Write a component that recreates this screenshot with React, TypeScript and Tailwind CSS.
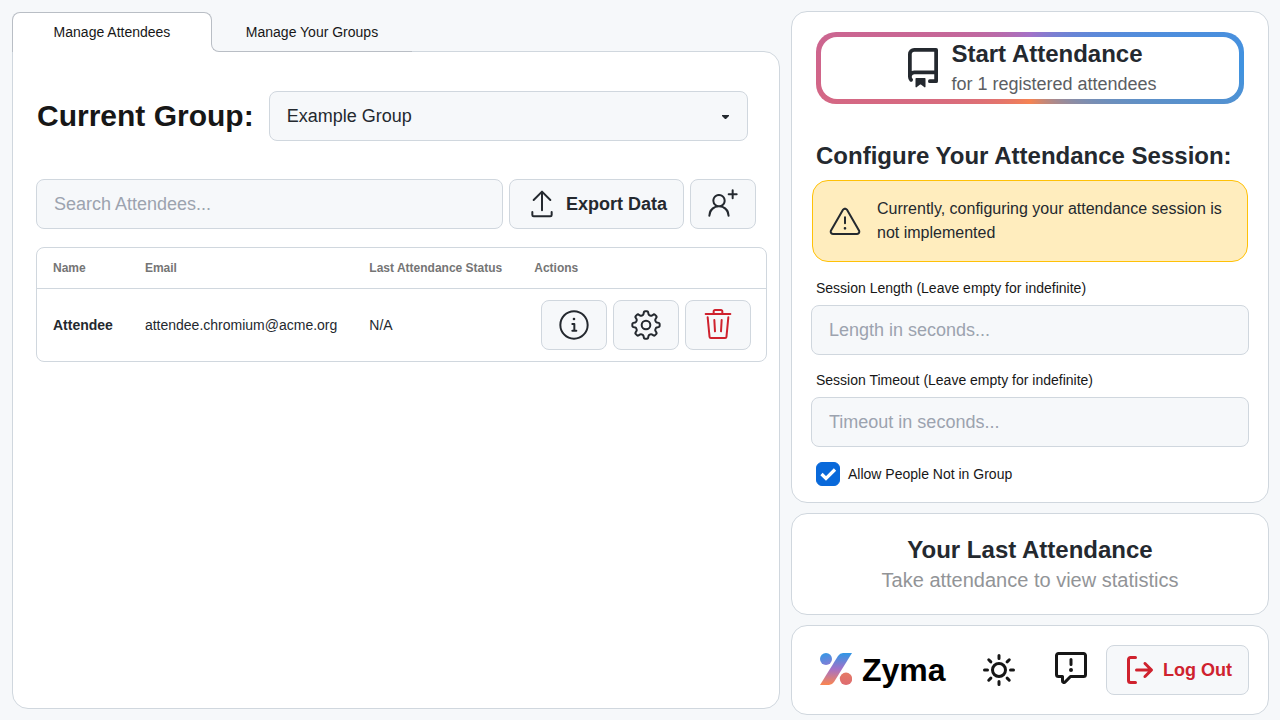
import { useId } from "react";
import type { ReactNode } from "react";
import { GoAlert, GoGear, GoInfo, GoPersonAdd, GoTrash, GoUpload } from "react-icons/go";

type Attendee = { name: string; email: string; status: string };

const attendees: Attendee[] = [
  { name: "Attendee", email: "attendee.chromium@acme.org", status: "N/A" },
];

const iconPaths = {
  repo: "M2 2.5A2.5 2.5 0 0 1 4.5 0h8.75a.75.75 0 0 1 .75.75v12.5a.75.75 0 0 1-.75.75h-2.5a.75.75 0 0 1 0-1.5h1.75v-2h-8a1 1 0 0 0-.714 1.7.75.75 0 1 1-1.072 1.05A2.495 2.495 0 0 1 2 11.5Zm10.5-1h-8a1 1 0 0 0-1 1v6.708A2.486 2.486 0 0 1 4.5 9h8ZM5 12.25a.25.25 0 0 1 .25-.25h3.5a.25.25 0 0 1 .25.25v3.25a.25.25 0 0 1-.4.2l-1.45-1.087a.249.249 0 0 0-.3 0L5.4 15.7a.25.25 0 0 1-.4-.2Z",
  sun: "M8 12a4 4 0 1 1 0-8 4 4 0 0 1 0 8Zm0-1.5a2.5 2.5 0 1 0 0-5 2.5 2.5 0 0 0 0 5Zm5.657-8.157a.75.75 0 0 1 0 1.061l-1.061 1.06a.749.749 0 0 1-1.275-.326.749.749 0 0 1 .215-.734l1.06-1.06a.75.75 0 0 1 1.06 0Zm-9.193 9.193a.75.75 0 0 1 0 1.06l-1.06 1.061a.75.75 0 1 1-1.061-1.06l1.06-1.061a.75.75 0 0 1 1.061 0ZM8 0a.75.75 0 0 1 .75.75v1.5a.75.75 0 0 1-1.5 0V.75A.75.75 0 0 1 8 0ZM3 8a.75.75 0 0 1-.75.75H.75a.75.75 0 0 1 0-1.5h1.5A.75.75 0 0 1 3 8Zm13 0a.75.75 0 0 1-.75.75h-1.5a.75.75 0 0 1 0-1.5h1.5A.75.75 0 0 1 16 8Zm-8 5a.75.75 0 0 1 .75.75v1.5a.75.75 0 0 1-1.5 0v-1.5A.75.75 0 0 1 8 13Zm3.536-1.464a.75.75 0 0 1 1.06 0l1.061 1.06a.75.75 0 0 1-1.06 1.061l-1.061-1.06a.75.75 0 0 1 0-1.061ZM2.343 2.343a.75.75 0 0 1 1.061 0l1.06 1.061a.751.751 0 0 1-.018 1.042.751.751 0 0 1-1.042.018l-1.06-1.06a.75.75 0 0 1 0-1.06Z",
  report:
    "M0 1.75C0 .784.784 0 1.75 0h12.5C15.216 0 16 .784 16 1.75v9.5A1.75 1.75 0 0 1 14.25 13H8.06l-2.573 2.573A1.458 1.458 0 0 1 3 14.543V13H1.75A1.75 1.75 0 0 1 0 11.25Zm1.75-.25a.25.25 0 0 0-.25.25v9.5c0 .138.112.25.25.25h2a.75.75 0 0 1 .75.75v2.19l2.72-2.72a.749.749 0 0 1 .53-.22h6.5a.25.25 0 0 0 .25-.25v-9.5a.25.25 0 0 0-.25-.25Zm7 2.25v2.5a.75.75 0 0 1-1.5 0v-2.5a.75.75 0 0 1 1.5 0ZM9 9a1 1 0 1 1-2 0 1 1 0 0 1 2 0Z",
  signOut:
    "M2 2.75C2 1.784 2.784 1 3.75 1h2.5a.75.75 0 0 1 0 1.5h-2.5a.25.25 0 0 0-.25.25v10.5c0 .138.112.25.25.25h2.5a.75.75 0 0 1 0 1.5h-2.5A1.75 1.75 0 0 1 2 13.25Zm10.44 4.5-1.97-1.97a.749.749 0 0 1 .326-1.275.749.749 0 0 1 .734.215l3.25 3.25a.75.75 0 0 1 0 1.06l-3.25 3.25a.749.749 0 0 1-1.275-.326.749.749 0 0 1 .215-.734l1.97-1.97H6.75a.75.75 0 0 1 0-1.5Z",
};

function Icon({ name, className }: { name: keyof typeof iconPaths; className: string }) {
  return (
    <svg viewBox="0 0 16 16" fill="currentColor" aria-hidden="true" className={className}>
      <path d={iconPaths[name]} />
    </svg>
  );
}

function Logo() {
  return (
    <svg viewBox="0 0 32 32" aria-hidden="true" className="mb-0.5 size-8">
      <defs>
        <linearGradient id="logo-fill" x1="0" y1="0" x2="0" y2="32" gradientUnits="userSpaceOnUse">
          <stop offset="0" stopColor="#2f97e6" />
          <stop offset="0.5" stopColor="#a371c8" />
          <stop offset="1" stopColor="#fb8650" />
        </linearGradient>
        <linearGradient id="logo-top" x1="4" y1="0" x2="8" y2="13" gradientUnits="userSpaceOnUse">
          <stop offset="0" stopColor="#3398e6" />
          <stop offset="1" stopColor="#8a7ad4" />
        </linearGradient>
        <linearGradient id="logo-bottom" x1="26" y1="20" x2="26" y2="32" gradientUnits="userSpaceOnUse">
          <stop offset="0" stopColor="#e47a66" />
          <stop offset="1" stopColor="#de6b70" />
        </linearGradient>
      </defs>
      <circle cx="6" cy="6" r="6" fill="url(#logo-top)" />
      <path d="M0 32 18 3Q20 0 23 0H32L14 29Q12 32 9 32Z" fill="url(#logo-fill)" />
      <circle cx="26" cy="25.800" r="6.200" fill="url(#logo-bottom)" />
    </svg>
  );
}

function Card({ className, children }: { className: string; children: ReactNode }) {
  return (
    <section className={`rounded-2xl border border-[#d0d7de] bg-white ${className}`}>{children}</section>
  );
}

function Button({ label, className = "", children }: { label?: string; className?: string; children: ReactNode }) {
  return (
    <button
      type="button"
      aria-label={label}
      className={`flex h-[50px] shrink-0 items-center rounded-lg border border-[#d0d7de] bg-[#f6f8fa] px-4 text-lg font-bold ${className}`}
    >
      {children}
    </button>
  );
}

function Field({ label, placeholder }: { label: string; placeholder: string }) {
  const id = useId();
  return (
    <div>
      <label htmlFor={id} className="block px-[5px] pt-2 pb-[7px] text-sm text-[#171717]">
        {label}
      </label>
      <input
        id={id}
        type="text"
        placeholder={placeholder}
        className="block h-[50px] w-full rounded-lg border border-[#d0d7de] bg-[#f6f8fa] px-[17px] text-lg placeholder:text-[#9ca3af]"
      />
    </div>
  );
}

function Tabs() {
  return (
    <div role="tablist" className="relative z-10 -mb-px flex text-sm text-[#171717]">
      <button
        type="button"
        role="tab"
        aria-selected="true"
        className="h-10 w-[200px] rounded-t-lg border border-b-0 border-[#b9bec5] bg-white pb-0.5"
      >
        Manage Attendees
      </button>
      <div className="mt-2 -ml-px bg-white">
        <button
          type="button"
          role="tab"
          aria-selected="false"
          className="h-8 w-[201px] rounded-bl-lg border-b border-l border-[#b9bec5] bg-[#f6f8fa] pb-[7px]"
        >
          Manage Your Groups
        </button>
      </div>
    </div>
  );
}

function AttendeeTable() {
  return (
    <div className="mt-[18px] overflow-hidden rounded-lg border border-[#d0d7de]">
      <table className="w-full text-left text-sm">
        <thead className="border-b border-[#d0d7de] text-xs text-[#757575]">
          <tr className="h-10 whitespace-nowrap">
            <th className="px-4">Name</th>
            <th className="px-4">Email</th>
            <th className="px-4">Last Attendance Status</th>
            <th className="px-4">Actions</th>
          </tr>
        </thead>
        <tbody>
          {attendees.map((a) => (
            <tr key={a.email}>
              <th scope="row" className="px-4">{a.name}</th>
              <td className="px-4">{a.email}</td>
              <td className="px-4">{a.status}</td>
              <td className="py-[11px] pr-[15px] pl-[23px]">
                <div className="flex justify-end gap-1.5">
                  <Button label="Attendee information">
                    <GoInfo className="size-8" />
                  </Button>
                  <Button label="Attendee settings">
                    <GoGear className="size-8" />
                  </Button>
                  <Button label="Delete attendee" className="text-[#cf222e]">
                    <GoTrash className="size-8" />
                  </Button>
                </div>
              </td>
            </tr>
          ))}
        </tbody>
      </table>
    </div>
  );
}

function ManagePanel() {
  return (
    <main className="ml-3 flex w-3/5 flex-col pt-3 pb-[11px]">
      <Tabs />
      <section className="flex-1 rounded-2xl rounded-tl-none border border-[#d0d7de] bg-white pt-[39px] pr-3 pb-6 pl-[23px]">
        <div className="flex items-center gap-[15px] pr-[19px]">
          <label htmlFor="group" className="pl-px text-3xl font-bold whitespace-nowrap text-[#171717]">
            Current Group:
          </label>
          <div className="relative flex-1">
            <select
              id="group"
              className="block h-[50px] w-full appearance-none rounded-lg border border-[#d0d7de] bg-[#f6f8fa] px-[17px] text-lg"
            >
              <option>Example Group</option>
            </select>
            <svg
              viewBox="0 0 7 4"
              aria-hidden="true"
              className="pointer-events-none absolute top-6 right-[19px] h-1 w-[7px]"
            >
              <path d="M0 0h7v1L4 4H3L0 1Z" fill="currentColor" />
            </svg>
          </div>
        </div>
        <div className="mt-[38px] flex gap-1.5 pr-[11px]">
          <input
            type="search"
            aria-label="Search attendees"
            placeholder="Search Attendees..."
            className="h-[50px] min-w-0 flex-1 rounded-lg border border-[#d0d7de] bg-[#f6f8fa] px-[17px] text-lg placeholder:text-[#9ca3af]"
          />
          <Button className="gap-2">
            <GoUpload className="size-8" />
            Export Data
          </Button>
          <Button label="Add attendee">
            <GoPersonAdd className="size-8" />
          </Button>
        </div>
        <AttendeeTable />
      </section>
    </main>
  );
}

function SessionCard() {
  return (
    <Card className="px-[19px] pt-5 pb-4">
      <div className="px-[5px]">
        <button
          type="button"
          className="block w-full rounded-[20px] bg-[conic-gradient(#a371c8,#3f93e0_25%,#f58352_50%,#d0648a_75%,#a371c8)] p-[5px]"
        >
          <span className="flex h-[62px] items-center justify-center gap-2 rounded-2xl bg-white">
            <Icon name="repo" className="size-10" />
            <span className="text-left">
              <span className="block text-2xl font-bold">Start Attendance</span>
              <span className="block text-lg text-[#5b5e63]">for 1 registered attendees</span>
            </span>
          </span>
        </button>
      </div>
      <h2 className="mt-9 px-[5px] text-2xl font-bold">Configure Your Attendance Session:</h2>
      <div
        role="alert"
        className="mx-px mt-2 mb-2 flex items-center gap-4 rounded-2xl border border-[#ffc107] bg-[#ffedbe] p-4"
      >
        <GoAlert className="size-8 shrink-0" />
        <p>Currently, configuring your attendance session is not implemented</p>
      </div>
      <div className="flex flex-col gap-[7px]">
        <Field label="Session Length (Leave empty for indefinite)" placeholder="Length in seconds..." />
        <Field label="Session Timeout (Leave empty for indefinite)" placeholder="Timeout in seconds..." />
      </div>
      <label className="mt-[15px] flex items-center gap-2 px-[5px] text-sm text-[#171717]">
        <span className="relative flex">
          <input
            type="checkbox"
            defaultChecked
            className="peer size-6 appearance-none rounded-md border border-[#d0d7de] checked:border-[#0969da] checked:bg-[#0969da]"
          />
          <svg
            viewBox="0 0 24 24"
            aria-hidden="true"
            className="pointer-events-none absolute inset-0 hidden size-6 peer-checked:block"
          >
            <path d="M5.500 12 10 16.500 19 7.500" fill="none" stroke="white" strokeWidth="3.200" />
          </svg>
        </span>
        Allow People Not in Group
      </label>
    </Card>
  );
}

function FooterCard() {
  return (
    <Card className="flex items-center justify-between py-[19px] pr-[19px] pl-7">
      <a href="#home" className="flex items-center gap-2.5 text-[32px] leading-8 font-bold text-black">
        <Logo />
        Zyma
      </a>
      <button type="button" aria-label="Toggle theme" className="pr-0.5 text-[#171717]">
        <Icon name="sun" className="size-8" />
      </button>
      <div className="flex items-center gap-[19px]">
        <button type="button" aria-label="Send feedback" className="pb-1 text-[#171717]">
          <Icon name="report" className="size-8" />
        </button>
        <Button className="gap-2 text-[#cf222e]">
          <Icon name="signOut" className="size-8" />
          Log Out
        </Button>
      </div>
    </Card>
  );
}

export default function App() {
  return (
    <div className="flex min-h-screen bg-[#f6f8fa] font-['Liberation_Sans',Arial,sans-serif] text-[#24292f]">
      <ManagePanel />
      <aside className="flex min-w-0 flex-1 flex-col gap-2.5 px-[11px] pt-[11px] pb-[5px]">
        <SessionCard />
        <Card className="px-5 py-5 text-center">
          <h2 className="text-2xl font-bold">Your Last Attendance</h2>
          <p className="text-xl text-[#929497]">Take attendance to view statistics</p>
        </Card>
        <FooterCard />
      </aside>
    </div>
  );
}
